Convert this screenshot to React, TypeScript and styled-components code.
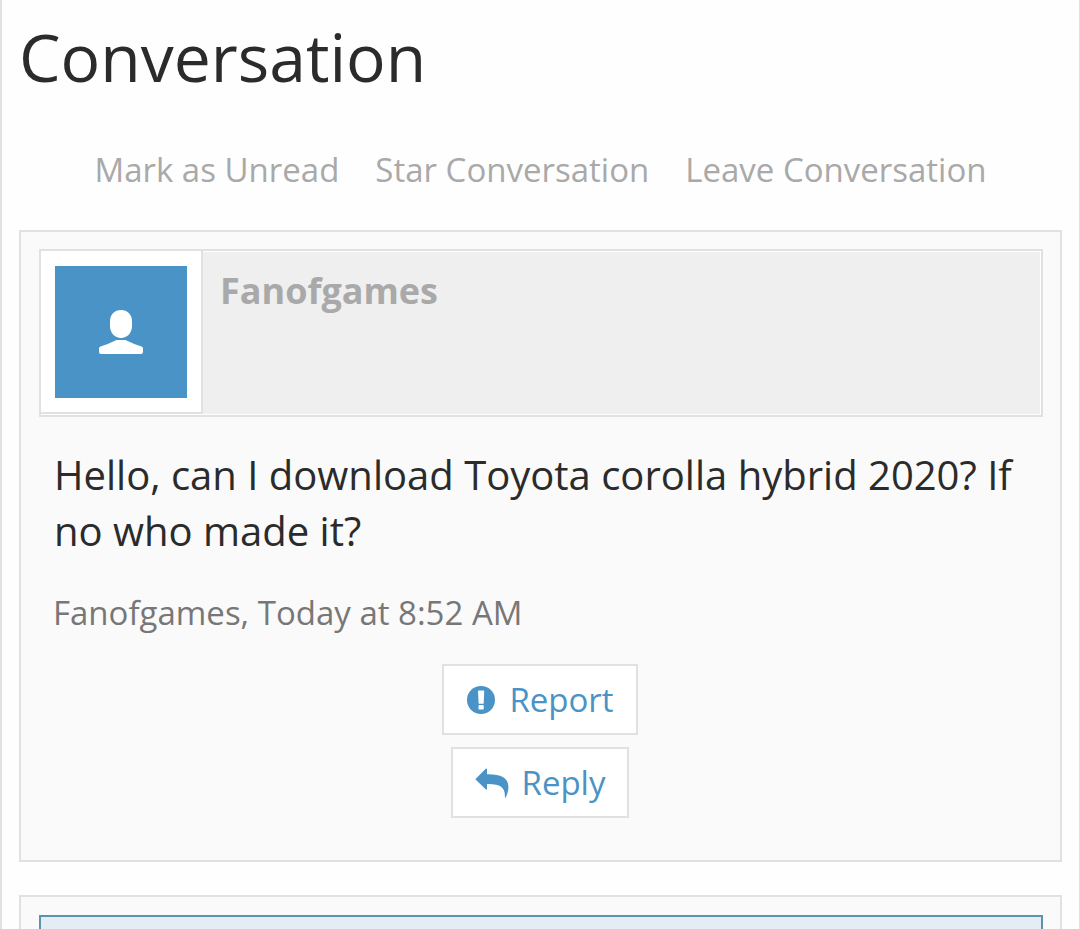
import React from 'react';
import styled, { createGlobalStyle } from 'styled-components';

const GlobalStyle = createGlobalStyle`
  *, *::before, *::after { box-sizing: border-box; }
  body {
    margin: 0;
    background: #fefefe;
    color: #2b2b2b;
    font-family: "Open Sans", "Noto Sans", sans-serif;
  }
`;

const Page = styled.main`
  display: flex;
  flex-direction: column;
  min-height: 100vh;
  padding: 11px 17px 0;
  border-left: 2px solid #e1e1e1;
  border-right: 1px solid #e1e1e1;
`;

const Title = styled.h1`
  margin: 0;
  font-size: 66px;
  font-weight: 400;
  line-height: 90px;
`;

const Actions = styled.nav`
  display: flex;
  flex-wrap: wrap;
  justify-content: center;
  gap: 0 36px;
  margin: 45px 0 36px;
`;

const ActionLink = styled.a`
  color: #a9a9a9;
  font-size: 33px;
  line-height: 48px;
  text-decoration: none;
`;

const Card = styled.section<{ $grow?: boolean }>`
  display: flex;
  flex-direction: column;
  padding: 17px 17px 42px 18px;
  border: 2px solid #e1e1e1;
  background: #fafafa;
  ${(p) =>
    p.$grow &&
    'flex: 1; margin-top: 33px; padding-top: 18px; padding-bottom: 0; border-bottom: 0;'}
`;

const MessageHeader = styled.header`
  display: flex;
  align-items: flex-start;
  border: 2px solid #e1e1e1;
  background: #efefef;
  box-shadow: inset 0 0 0 1px #fefefe;
  height: 168px;
`;

const AvatarFrame = styled.a`
  display: block;
  flex: none;
  padding: 15px 14px 14px;
  border: solid #e1e1e1;
  border-width: 0 2px 2px 0;
  background: #fff;
`;

const Avatar = styled.svg`
  display: block;
  width: 132px;
  height: 132px;
  background: #4a93c6;
`;

const Author = styled.a`
  margin: 16px 17px 0;
  color: #a9a9a9;
  font-size: 36px;
  font-weight: 700;
  line-height: 48px;
  text-decoration: none;
`;

const MessageText = styled.p`
  margin: 30px 14px 0 15px;
  font-size: 40px;
  line-height: 56px;
`;

const Meta = styled.p`
  margin: 30px 14px 0;
  color: #777;
  font-size: 33px;
  line-height: 48px;
`;

const Controls = styled.div`
  display: flex;
  flex-direction: column;
  align-items: center;
  gap: 12px;
  margin-top: 27px;
  padding-right: 2px;
`;

const Control = styled.button`
  display: flex;
  align-items: center;
  gap: 13px;
  height: 71px;
  padding: 0 22px;
  border: 2px solid #e1e1e1;
  background: #fff;
  color: #4a93c6;
  font: inherit;
  font-size: 33px;
  cursor: pointer;

  svg { display: block; flex: none; }
`;

const ReplyBox = styled.div`
  flex: 1;
  border: 2px solid #5f93ad;
  border-bottom: 0;
  background: #e4ecf4;
`;

function ReportIcon() {
  return (
    <svg width="30" height="30" viewBox="0 0 30 30" aria-hidden="true">
      <circle cx="15" cy="15" r="14" fill="currentColor" />
      <path d="M12 6.200q0-.7.700-.7h4.800q.7 0 .7.700l-.5 12q0 .5-.6.500h-3.900q-.6 0-.6-.500z" fill="#fff" />
      <rect x="12.500" y="20" width="5.200" height="4.400" rx=".7" fill="#fff" />
    </svg>
  );
}

function ReplyIcon() {
  return (
    <svg width="34" height="30" viewBox="0 0 34 30" aria-hidden="true">
      <path
        d="M.3 11.200 10.700.8q1.300-1 1.300.6V6.200c13.500-.2 21 3.300 21.400 12 .1 3.700-.8 7.500-2.600 11-.5.900-1 .6-.9-.3.500-9.500-4.400-13.300-17.900-13v4.700q0 1.700-1.300.7z"
        fill="currentColor"
      />
    </svg>
  );
}

export default function App() {
  return (
    <>
      <GlobalStyle />
      <Page>
        <Title>Conversation</Title>
        <Actions aria-label="Conversation actions">
          <ActionLink href="#unread">Mark as Unread</ActionLink>
          <ActionLink href="#star">Star Conversation</ActionLink>
          <ActionLink href="#leave">Leave Conversation</ActionLink>
        </Actions>
        <Card>
          <MessageHeader>
            <AvatarFrame href="#member" aria-label="Fanofgames">
              <Avatar viewBox="0 0 132 132" aria-hidden="true">
                <path
                  d="M66 44c6.200 0 11 4.500 11 11v5c0 7-4.800 12-11 12s-11-5-11-12v-5c0-6.500 4.800-11 11-11z"
                  fill="#fff"
                />
                <path
                  d="M61.500 74h9q8 4 16 6.500 1.500.6 1.500 2V86q0 2-2 2H46q-2 0-2-2v-3.500q0-1.400 1.500-2 8-2.500 16-6.500z"
                  fill="#fff"
                />
              </Avatar>
            </AvatarFrame>
            <Author href="#member">Fanofgames</Author>
          </MessageHeader>
          <MessageText>
            Hello, can I download Toyota corolla hybrid 2020? If no who made it?
          </MessageText>
          <Meta>Fanofgames, Today at 8:52 AM</Meta>
          <Controls>
            <Control type="button">
              <ReportIcon />
              Report
            </Control>
            <Control type="button">
              <ReplyIcon />
              Reply
            </Control>
          </Controls>
        </Card>
        <Card $grow>
          <ReplyBox />
        </Card>
      </Page>
    </>
  );
}
